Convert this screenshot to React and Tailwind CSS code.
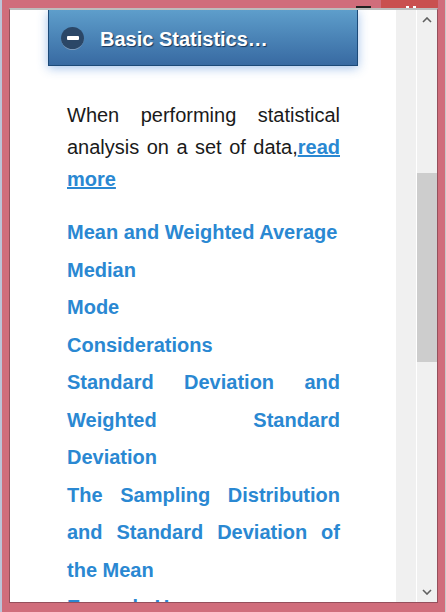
import React from 'react';

const links = [
  'Mean and Weighted Average',
  'Median',
  'Mode',
  'Considerations',
  'Standard Deviation and Weighted Standard Deviation',
  'The Sampling Distribution and Standard Deviation of the Mean',
  'Example Usage',
];

// Chevron for the scrollbar buttons
const Chevron = ({ down }) => (
  <svg width="10" height="6" viewBox="0 0 10 6" className={down ? 'rotate-180' : ''}>
    <path d="M1 5 L5 1 L9 5" fill="none" stroke="#606060" strokeWidth="1.6" />
  </svg>
);

const App = () => {
  return (
    <div className="relative w-[446px] h-[612px] flex overflow-hidden font-['Liberation_Sans',Arial,sans-serif]">
      <div className="w-[2px] bg-[#bcc4d8]"></div>

      {/* window frame */}
      <div className="flex-1 flex bg-[#d06d7b] pl-[7px] pr-[7px] pt-[8px] pb-[9px]">
        <div className="flex-1 flex border-l border-r border-b border-[#95505c] border-t-2 border-t-[#bdbdbd] bg-white overflow-hidden">
          {/* page */}
          <div className="w-[386px] h-full overflow-hidden">
            <div className="ml-[38px] w-[310px] h-[56px] pt-[2px] flex items-center border-x border-b border-[#1c4a78] bg-gradient-to-b from-[#5e9ecb] to-[#386aa2] shadow-[0_2px_10px_rgba(50,120,210,0.45)]">
              <div className="ml-[12px] w-[23px] h-[23px] rounded-full bg-[#2b4767] border-b border-[#7c9abb] flex items-center justify-center">
                <div className="w-[12px] h-[4px] rounded-[1px] bg-white"></div>
              </div>
              <span className="ml-[16px] text-[20px] font-bold text-white [text-shadow:1px_1px_1px_#17365a]">
                Basic Statistics…
              </span>
            </div>

            <p className="ml-[57px] mt-[33px] w-[273px] text-[20px] leading-[32px] text-justify text-[#1a1a1a]">
              When performing statistical analysis on a set of data,
              <a href="#" className="font-bold underline text-[#2a88d2]">read more</a>
            </p>

            <div className="ml-[57px] mt-[19px] w-[273px]">
              {links.map((l) => (
                <div key={l} className="text-[20px] leading-[37.5px] font-bold text-justify text-[#2a88d2]">
                  {l}
                </div>
              ))}
            </div>
          </div>

          <div className="w-[20px] bg-[#f0f0f0]"></div>
          <div className="w-[1px] bg-white"></div>

          {/* scrollbar */}
          <div className="w-[20px] bg-[#f0f0f0] flex flex-col items-center">
            <div className="h-[20px] flex items-center justify-center">
              <Chevron />
            </div>
            <div className="flex-1 w-full">
              <div className="mt-[143px] h-[189px] w-full bg-[#cdcdcd]"></div>
            </div>
            <div className="h-[20px] flex items-center justify-center">
              <Chevron down />
            </div>
          </div>
        </div>
      </div>

      <div className="w-[1px] bg-[#c8c8c8]"></div>

      {/* title bar remnants */}
      <div className="absolute left-[356px] top-[6px] w-[15px] h-[2px] bg-[#222]"></div>
      <div className="absolute left-[381px] top-0 w-[57px] h-[8px] bg-[#c9504f]">
        <div className="absolute left-[25px] top-[6px] w-[3px] h-[2px] bg-white"></div>
        <div className="absolute left-[32px] top-[6px] w-[3px] h-[2px] bg-white"></div>
      </div>
    </div>
  );
};

export default App;
